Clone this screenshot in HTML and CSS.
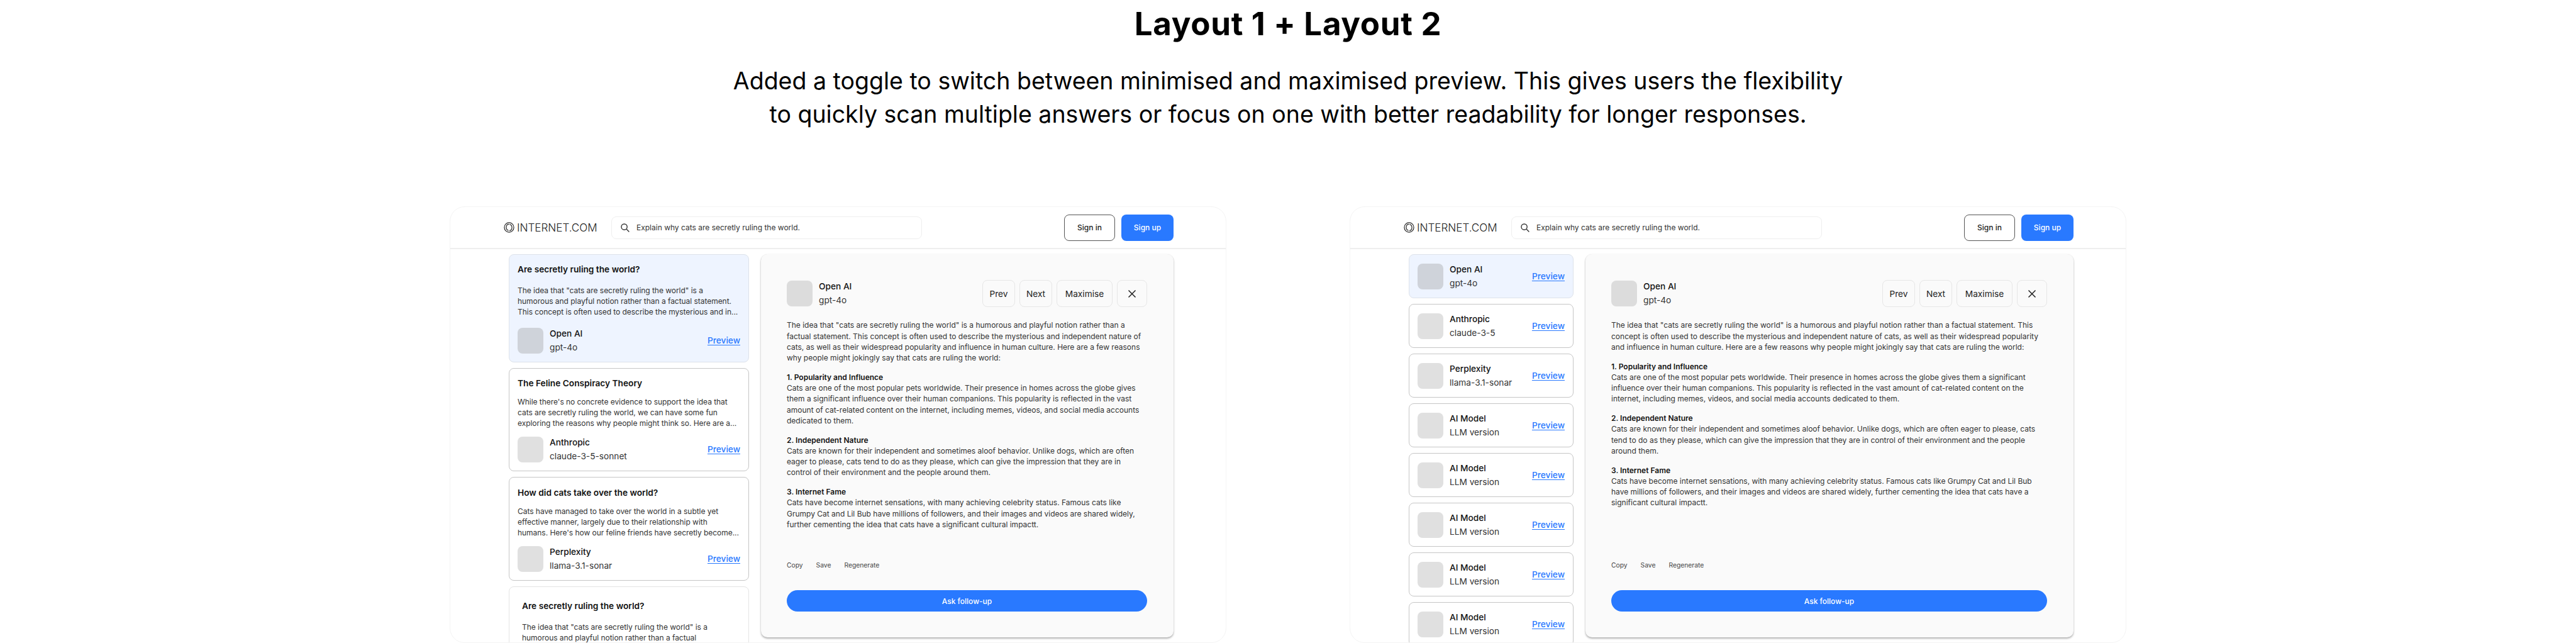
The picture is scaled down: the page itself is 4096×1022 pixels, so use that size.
FILE: index.html
```html
<!DOCTYPE html>
<html lang="en">
<head>
<meta charset="utf-8">
<title>Layout 1 + Layout 2</title>
<link rel="stylesheet" href="styles.css">
</head>
<body>
<header class="intro">
  <h1 class="intro-title">Layout 1 + Layout 2</h1>
  <p class="intro-text">Added a toggle to switch between minimised and maximised preview. This gives users the flexibility<br>to quickly scan multiple answers or focus on one with better readability for longer responses.</p>
</header>
<main class="stage">

  <section class="frame">
    <div class="topbar">
      <div class="logo">
        <svg class="logo-icon" viewBox="0 0 18 18" fill="none" stroke="#2a2a2a" stroke-width="1.3"><circle cx="9" cy="9" r="8"/><path d="M9 3.6C6 3.6 4.2 6 4.2 9c0 2.6 1.6 4.6 3.8 5.2M9.6 14.4c2.6-.3 4.2-2.6 4.2-5.4 0-2.6-1.5-4.6-3.8-5.2"/></svg>
        <span class="logo-text">INTERNET.COM</span>
      </div>
      <div class="search">
        <svg class="search-icon" viewBox="0 0 14 14" fill="none" stroke="#333" stroke-width="1.4"><circle cx="5.6" cy="5.6" r="4.6"/><path d="M9 9l4.4 4.4"/></svg>
        <span>Explain why cats are secretly ruling the world.</span>
      </div>
      <div class="auth">
        <span class="btn-in">Sign in</span>
        <span class="btn-up">Sign up</span>
      </div>
    </div>
    <div class="content">
      <div class="list list-wide">
        <article class="card active card-a">
          <h3 class="card-title">Are secretly ruling the world?</h3>
          <p class="card-body">The idea that "cats are secretly ruling the world" is a<br>humorous and playful notion rather than a factual statement. This concept is often used to describe the mysterious and in...</p>
          <div class="model"><span class="avatar"></span><div class="model-info"><b>Open AI</b><span>gpt-4o</span></div><a class="preview-link">Preview</a></div>
        </article>
        <article class="card strong">
          <h3 class="card-title">The Feline Conspiracy Theory</h3>
          <p class="card-body">While there's no concrete evidence to support the idea that cats are secretly ruling the world, we can have some fun exploring the reasons why people might think so. Here are a...</p>
          <div class="model"><span class="avatar"></span><div class="model-info"><b>Anthropic</b><span>claude-3-5-sonnet</span></div><a class="preview-link">Preview</a></div>
        </article>
        <article class="card strong card-c">
          <h3 class="card-title">How did cats take over the world?</h3>
          <p class="card-body">Cats have managed to take over the world in a subtle yet effective manner, largely due to their relationship with<br>humans. Here's how our feline friends have secretly become...</p>
          <div class="model"><span class="avatar"></span><div class="model-info"><b>Perplexity</b><span>llama-3.1-sonar</span></div><a class="preview-link">Preview</a></div>
        </article>
        <article class="card card-d">
          <h3 class="card-title">Are secretly ruling the world?</h3>
          <p class="card-body">The idea that "cats are secretly ruling the world" is a<br>humorous and playful notion rather than a factual<br>statement.</p>
        </article>
      </div>
      <aside class="panel">
        <div class="panel-head">
          <div class="model"><span class="avatar"></span><div class="model-info"><b>Open AI</b><span>gpt-4o</span></div></div>
          <div class="tools">
            <span class="tool">Prev</span><span class="tool">Next</span><span class="tool tool-wide">Maximise</span>
            <span class="tool tool-x"><svg viewBox="0 0 14 14" fill="none" stroke="#222" stroke-width="1.5"><path d="M1.5 1.5l11 11M12.5 1.5l-11 11"/></svg></span>
          </div>
        </div>
        <div class="answer">
          <p>The idea that "cats are secretly ruling the world" is a humorous and playful notion rather than a factual statement. This concept is often used to describe the mysterious and independent nature of cats, as well as their widespread popularity and influence in human culture. Here are a few reasons why people might jokingly say that cats are ruling the world:</p>
          <p><b>1. Popularity and Influence</b><br>Cats are one of the most popular pets worldwide. Their presence in homes across the globe gives them a significant influence over their human companions. This popularity is reflected in the vast amount of cat-related content on the internet, including memes, videos, and social media accounts dedicated to them.</p>
          <p><b>2. Independent Nature</b><br>Cats are known for their independent and sometimes aloof behavior. Unlike dogs, which are often eager to please, cats tend to do as they please, which can give the impression that they are in control of their environment and the people around them.</p>
          <p><b>3. Internet Fame</b><br>Cats have become internet sensations, with many achieving celebrity status. Famous cats like Grumpy Cat and Lil Bub have millions of followers, and their images and videos are shared widely, further cementing the idea that cats have a significant cultural impactt.</p>
        </div>
        <div class="actions"><span>Copy</span><span>Save</span><span>Regenerate</span></div>
        <div class="ask">Ask follow-up</div>
      </aside>
    </div>
  </section>

  <section class="frame">
    <div class="topbar">
      <div class="logo">
        <svg class="logo-icon" viewBox="0 0 18 18" fill="none" stroke="#2a2a2a" stroke-width="1.3"><circle cx="9" cy="9" r="8"/><path d="M9 3.6C6 3.6 4.2 6 4.2 9c0 2.6 1.6 4.6 3.8 5.2M9.6 14.4c2.6-.3 4.2-2.6 4.2-5.4 0-2.6-1.5-4.6-3.8-5.2"/></svg>
        <span class="logo-text">INTERNET.COM</span>
      </div>
      <div class="search">
        <svg class="search-icon" viewBox="0 0 14 14" fill="none" stroke="#333" stroke-width="1.4"><circle cx="5.6" cy="5.6" r="4.6"/><path d="M9 9l4.4 4.4"/></svg>
        <span>Explain why cats are secretly ruling the world.</span>
      </div>
      <div class="auth">
        <span class="btn-in">Sign in</span>
        <span class="btn-up">Sign up</span>
      </div>
    </div>
    <div class="content">
      <div class="list list-narrow">
        <article class="card active mini"><div class="model"><span class="avatar"></span><div class="model-info"><b>Open AI</b><span>gpt-4o</span></div><a class="preview-link">Preview</a></div></article>
        <article class="card strong mini"><div class="model"><span class="avatar"></span><div class="model-info"><b>Anthropic</b><span>claude-3-5</span></div><a class="preview-link">Preview</a></div></article>
        <article class="card strong mini"><div class="model"><span class="avatar"></span><div class="model-info"><b>Perplexity</b><span>llama-3.1-sonar</span></div><a class="preview-link">Preview</a></div></article>
        <article class="card strong mini"><div class="model"><span class="avatar"></span><div class="model-info"><b>AI Model</b><span>LLM version</span></div><a class="preview-link">Preview</a></div></article>
        <article class="card strong mini"><div class="model"><span class="avatar"></span><div class="model-info"><b>AI Model</b><span>LLM version</span></div><a class="preview-link">Preview</a></div></article>
        <article class="card strong mini"><div class="model"><span class="avatar"></span><div class="model-info"><b>AI Model</b><span>LLM version</span></div><a class="preview-link">Preview</a></div></article>
        <article class="card strong mini"><div class="model"><span class="avatar"></span><div class="model-info"><b>AI Model</b><span>LLM version</span></div><a class="preview-link">Preview</a></div></article>
        <article class="card strong mini"><div class="model"><span class="avatar"></span><div class="model-info"><b>AI Model</b><span>LLM version</span></div><a class="preview-link">Preview</a></div></article>
      </div>
      <aside class="panel">
        <div class="panel-head">
          <div class="model"><span class="avatar"></span><div class="model-info"><b>Open AI</b><span>gpt-4o</span></div></div>
          <div class="tools">
            <span class="tool">Prev</span><span class="tool">Next</span><span class="tool tool-wide">Maximise</span>
            <span class="tool tool-x"><svg viewBox="0 0 14 14" fill="none" stroke="#222" stroke-width="1.5"><path d="M1.5 1.5l11 11M12.5 1.5l-11 11"/></svg></span>
          </div>
        </div>
        <div class="answer">
          <p>The idea that "cats are secretly ruling the world" is a humorous and playful notion rather than a factual statement. This concept is often used to describe the mysterious and independent nature of cats, as well as their widespread popularity and influence in human culture. Here are a few reasons why people might jokingly say that cats are ruling the world:</p>
          <p><b>1. Popularity and Influence</b><br>Cats are one of the most popular pets worldwide. Their presence in homes across the globe gives them a significant influence over their human companions. This popularity is reflected in the vast amount of cat-related content on the internet, including memes, videos, and social media accounts dedicated to them.</p>
          <p><b>2. Independent Nature</b><br>Cats are known for their independent and sometimes aloof behavior. Unlike dogs, which are often eager to please, cats tend to do as they please, which can give the impression that they are in control of their environment and the people around them.</p>
          <p><b>3. Internet Fame</b><br>Cats have become internet sensations, with many achieving celebrity status. Famous cats like Grumpy Cat and Lil Bub have millions of followers, and their images and videos are shared widely, further cementing the idea that cats have a significant cultural impactt.</p>
        </div>
        <div class="actions"><span>Copy</span><span>Save</span><span>Regenerate</span></div>
        <div class="ask">Ask follow-up</div>
      </aside>
    </div>
  </section>

</main>
</body>
</html>
```
FILE: styles.css
```css
* { box-sizing: border-box; }
html, body { margin: 0; height: 1022px; overflow: hidden; background: #fff; }
body { font-family: "Inter", "Liberation Sans", sans-serif; color: #222; }

.intro { height: 328px; padding-top: 5px; text-align: center; color: #000; }
.intro-title { margin: 0; font-size: 51px; line-height: 66px; font-weight: 700; letter-spacing: 0.7px; }
.intro-text { margin: 32px 0 0; font-size: 37.5px; line-height: 52.5px; font-weight: 400; }

.stage { display: flex; justify-content: center; gap: 196px; height: 694px; }
.frame { width: 1235px; height: 694px; border: 1px solid #f4f4f4; border-radius: 24px; overflow: hidden; }

.topbar { display: flex; align-items: center; height: 67px; padding: 0 83px 0 85px; border-bottom: 2px solid #eee; }
.logo { display: flex; align-items: center; gap: 4px; width: 171px; }
.logo-icon { width: 17px; height: 17px; flex: none; }
.logo-text { font-size: 17.1px; font-weight: 300; line-height: 1; color: #222; }
.search { display: flex; align-items: center; gap: 11px; width: 494px; height: 36px; padding: 0 14px; border: 1.5px solid #eee; border-radius: 8px; font-size: 12px; color: #333; }
.search-icon { width: 14px; height: 14px; flex: none; }
.auth { display: flex; gap: 10px; margin-left: auto; }
.btn-in, .btn-up { display: flex; align-items: center; justify-content: center; height: 42px; border-radius: 8px; font-size: 12px; font-weight: 500; }
.btn-in { width: 81px; border: 1.5px solid #555; color: #222; }
.btn-up { width: 83px; background: #2979ff; color: #fff; }

.content { display: flex; padding: 8px 83px 0 93px; gap: 19px; }
.list { display: flex; flex-direction: column; gap: 9px; flex: none; }
.list-wide { width: 382px; }
.list-narrow { width: 262px; }

.card { flex: none; padding: 13px; border: 1px solid #e4e4e4; border-radius: 8px; background: #fff; }
.card.strong { border-color: #c6c6c6; }
.card.active { background: #eef4ff; border-color: #dde2ea; }
.card-title { margin: 0; font-size: 13.7px; line-height: 20px; font-weight: 600; color: #111; }
.card-body { margin: 11.4px -2px 12px 0; font-size: 12px; line-height: 17.2px; letter-spacing: -0.04px; color: #333; }
.card-a .card-body { margin-top: 15px; margin-bottom: 16px; }
.card-c { padding-top: 14px; }
.card-d { padding: 20px; }
.card-d .card-body { margin-top: 15.4px; }
.mini { height: 70px; padding: 14px 13px; }

.model { display: flex; align-items: center; gap: 10px; }
.avatar { width: 41px; height: 41px; flex: none; border-radius: 8px; background: #e0e0e0; }
.active .avatar { background: #cfd3da; }
.model-info { display: flex; flex-direction: column; gap: 5px; font-size: 13.7px; line-height: 17px; }
.model-info b { font-weight: 500; color: #111; }
.model-info span { color: #333; white-space: nowrap; }
.preview-link { margin-left: auto; font-size: 13.7px; font-weight: 500; line-height: 17px; color: #2979ff; text-decoration: underline; text-underline-offset: 2px; }

.panel { flex: 1; display: flex; flex-direction: column; height: 609px; padding: 41px 42px 41px 41px; border-radius: 10px; background: #fafafa; box-shadow: 0 2px 3px rgba(0, 0, 0, .3), 0 0 1px rgba(0, 0, 0, .12); }
.panel-head { display: flex; align-items: center; justify-content: space-between; height: 43px; }
.panel-head .avatar { background: #dcdcdc; }
.tools { display: flex; gap: 7px; }
.tool { display: flex; align-items: center; justify-content: center; width: 52px; height: 43px; border: 1px solid #e6e6e6; border-radius: 8px; font-size: 13.7px; color: #222; }
.tool-wide { width: 89px; }
.tool-x { width: 48px; }
.tool-x svg { width: 14px; height: 14px; }

.answer { margin-top: 20.4px; font-size: 12px; line-height: 17.2px; color: #333; }
.answer p { margin: 0 0 13.7px; }
.answer b { font-weight: 600; color: #111; }
.actions { display: flex; gap: 21px; margin-top: auto; font-size: 10.3px; line-height: 14px; color: #444; }
.ask { display: flex; align-items: center; justify-content: center; height: 34px; margin-top: 33px; border-radius: 17px; background: #2979ff; color: #fff; font-size: 12px; font-weight: 500; }
```
